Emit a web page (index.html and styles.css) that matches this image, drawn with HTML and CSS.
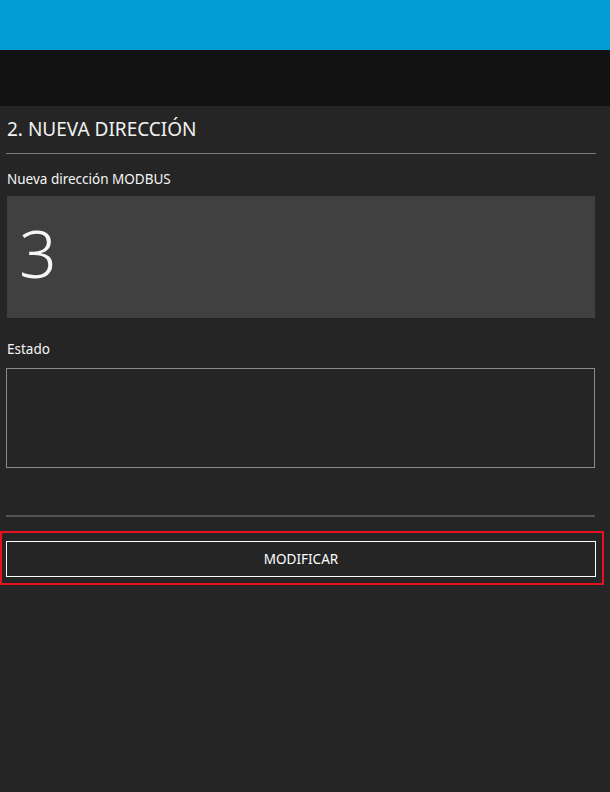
FILE: index.html
```html
<!DOCTYPE html>
<html lang="es">
<head>
<meta charset="utf-8">
<title>Nueva dirección</title>
<link rel="stylesheet" href="styles.css">
</head>
<body>
<div class="topbar"></div>
<div class="header"></div>
<main class="content">
  <h2 class="title">2. NUEVA DIRECCIÓN</h2>
  <div class="rule"></div>
  <div class="label label-first">Nueva dirección MODBUS</div>
  <div class="address-box"><span class="address-value">3</span></div>
  <div class="label label-status">Estado</div>
  <div class="status-box"></div>
  <div class="divider"></div>
  <div class="focus-frame">
    <button class="action-button" type="button">MODIFICAR</button>
  </div>
</main>
</body>
</html>
```

FILE: styles.css
```css
html, body {
  margin: 0;
  padding: 0;
  background: #252525;
  color: #ffffff;
  font-family: "Noto Sans", "Open Sans", "DejaVu Sans", sans-serif;
}

.topbar {
  height: 50px;
  background: #009dd4;
}

.header {
  height: 56px;
  background: #121212;
}

.content {
  padding: 0 14px 0 6px;
}

.title {
  margin: 0;
  padding: 10px 0 0 1px;
  height: 37px;
  font-size: 19px;
  font-weight: 400;
  line-height: 26px;
  color: #f2f2f2;
}

.rule {
  height: 1px;
  background: #7a7a7a;
}

.label {
  font-size: 13.5px;
  line-height: 18px;
  padding-left: 1px;
  color: #f5f5f5;
}

.label-first {
  margin-top: 16px;
  height: 26px;
}

.address-box {
  margin-left: 1px;
  margin-right: 1px;
  height: 122px;
  background: #404040;
  display: flex;
  align-items: center;
  padding-left: 12px;
}

.address-value {
  font-size: 66px;
  font-weight: 300;
  line-height: 1;
  color: #f5f5f5;
  margin-top: -10px;
}

.label-status {
  margin-top: 22px;
  height: 28px;
}

.status-box {
  height: 98px;
  border: 1px solid #8a8a8a;
  margin-right: 1px;
}

.divider {
  margin-top: 47px;
  height: 2px;
  background: #555555;
  margin-right: 1px;
}

.focus-frame {
  margin: 14px -8px 0 -6px;
  border: 2px solid #e81123;
  padding: 8px 6px 6px 4px;
}

.action-button {
  display: block;
  width: 100%;
  height: 36px;
  margin: 0;
  background: #252525;
  border: 1px solid #ffffff;
  color: #ffffff;
  font-family: "Noto Sans", "Open Sans", "DejaVu Sans", sans-serif;
  font-size: 13.5px;
  padding: 0;
  cursor: pointer;
}
```
